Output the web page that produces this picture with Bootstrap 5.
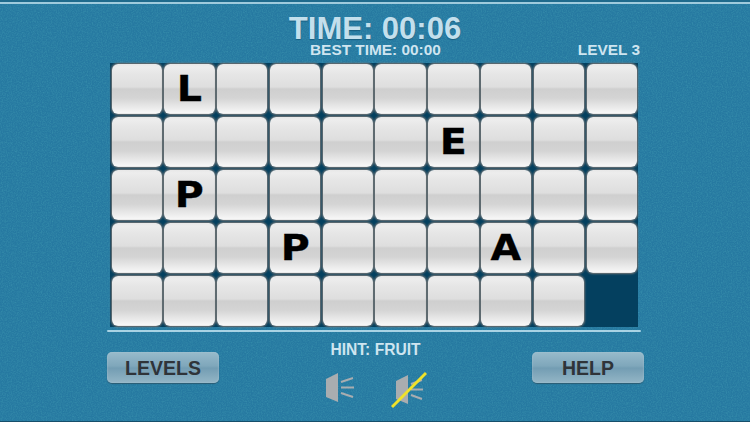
<!DOCTYPE html>
<html lang="en"><head><meta charset="utf-8"><title>Puzzle</title>
<link href="https://cdn.jsdelivr.net/npm/bootstrap@5.3.0/dist/css/bootstrap.min.css" rel="stylesheet">
<style>
html,body{height:422px;overflow:hidden}
body{width:750px;font-family:"Liberation Sans",Arial,sans-serif;font-weight:700;background-color:#2679a1;
background-image:url("data:image/svg+xml,%3Csvg xmlns='http://www.w3.org/2000/svg' width='300' height='300'%3E%3Cfilter id='n'%3E%3CfeTurbulence type='fractalNoise' baseFrequency='.8' numOctaves='3' seed='4'/%3E%3CfeColorMatrix values='0 0 0 0 .05 0 0 0 0 .32 0 0 0 0 .44 1 0 0 0 -.36'/%3E%3C/filter%3E%3Crect width='300' height='300' filter='url(%23n)'/%3E%3C/svg%3E");}
.stage{height:422px;border-top:2px solid #1f6a8c;border-bottom:1px solid #164f6b;position:relative;padding-top:13px}
.stage::before{content:"";display:block;position:absolute;left:0;right:0;top:0;height:2px;background:#9fcbdd}
.clock{font-size:31px;line-height:27px;color:#c3dfec;text-shadow:0 1px 1px #1a5f80}
.subline{width:532px;height:16px;font-size:15.4px;line-height:16px;color:#cfe5f0;margin-left:108px}
.subline span:first-child{margin-left:202px}
.board{width:528px;height:264px;margin:5px 0 0 110px;background:#04405f;padding:1px 1px 1px 1.5px;display:grid;grid-template-columns:repeat(10,1fr);grid-template-rows:repeat(5,1fr);gap:2.5px}
.tile{border-radius:6px;background:linear-gradient(#e8e8e8 0,#ededed 6%,#e6e6e6 20%,#dedede 46%,#cfcfcf 50%,#d4d4d4 68%,#e8e8e8 85%,#f6f6f6 97%,#e4e4e4 100%);box-shadow:0 0 2px 1px #757575;color:#000;font-family:"DejaVu Sans",sans-serif;font-size:36px;line-height:1;display:flex;align-items:center;justify-content:center}
.glyph{display:block;transform:scaleX(1.1);-webkit-text-stroke:.3px #000}
.gap-tile{background:none;box-shadow:none}
.rule{width:534px;height:2px;margin:3px 0 0 107px;background:#a9d3e4;border-radius:1px}
.foot{margin:10px 0 0 107px;width:537px;height:70px}
.pill{width:112px;height:31px;margin-top:10px;padding:0;border:0;border-radius:5px;background:linear-gradient(#98bbcb 0,#7fa7bb 45%,#739db3 52%,#94b6c6 100%);box-shadow:0 1px 1px #2c5c74,inset 0 0 2px #a9c6d4;color:#2f3439;font-size:19.5px;font-weight:700;line-height:32px}
.hintbox{color:#cfe5f0;font-size:15.6px;line-height:16px}
.sound{margin-top:13px;gap:36px}
</style></head>
<body>
<div class="stage">
<div class="clock text-center">TIME: 00:06</div>
<div class="subline d-flex justify-content-between"><span>BEST TIME: 00:00</span><span>LEVEL 3</span></div>
<div class="board">
<div class="tile"></div><div class="tile"><span class="glyph">L</span></div><div class="tile"></div><div class="tile"></div><div class="tile"></div><div class="tile"></div><div class="tile"></div><div class="tile"></div><div class="tile"></div><div class="tile"></div>
<div class="tile"></div><div class="tile"></div><div class="tile"></div><div class="tile"></div><div class="tile"></div><div class="tile"></div><div class="tile"><span class="glyph">E</span></div><div class="tile"></div><div class="tile"></div><div class="tile"></div>
<div class="tile"></div><div class="tile"><span class="glyph">P</span></div><div class="tile"></div><div class="tile"></div><div class="tile"></div><div class="tile"></div><div class="tile"></div><div class="tile"></div><div class="tile"></div><div class="tile"></div>
<div class="tile"></div><div class="tile"></div><div class="tile"></div><div class="tile"><span class="glyph">P</span></div><div class="tile"></div><div class="tile"></div><div class="tile"></div><div class="tile"><span class="glyph">A</span></div><div class="tile"></div><div class="tile"></div>
<div class="tile"></div><div class="tile"></div><div class="tile"></div><div class="tile"></div><div class="tile"></div><div class="tile"></div><div class="tile"></div><div class="tile"></div><div class="tile"></div><div class="gap-tile"></div>
</div>
<div class="rule"></div>
<div class="foot d-flex justify-content-between align-items-start">
<button class="btn pill" type="button">LEVELS</button>
<div class="hintbox text-center">
<div>HINT: FRUIT</div>
<div class="sound d-flex justify-content-center">
<svg width="30" height="32" viewBox="0 0 30 32"><path d="M1 8l12-6v29L1 26z" fill="#a9adb0"/><path d="M16 11l12-4M16 16.500h13M16 22l12 4" stroke="#a9adb0" stroke-width="2" fill="none"/></svg>
<svg width="36" height="38" viewBox="0 0 36 38"><path d="M5 10l12-6v29L5 28z" fill="#a9adb0"/><path d="M20 13l11-4M20 18.500h12M20 24l11 4" stroke="#a9adb0" stroke-width="2" fill="none"/><path d="M1 36L35 2" stroke="#f0e22a" stroke-width="3"/></svg>
</div>
</div>
<button class="btn pill" type="button">HELP</button>
</div>
</div>
<script src="https://cdn.jsdelivr.net/npm/bootstrap@5.3.0/dist/js/bootstrap.bundle.min.js"></script>
</body></html>
